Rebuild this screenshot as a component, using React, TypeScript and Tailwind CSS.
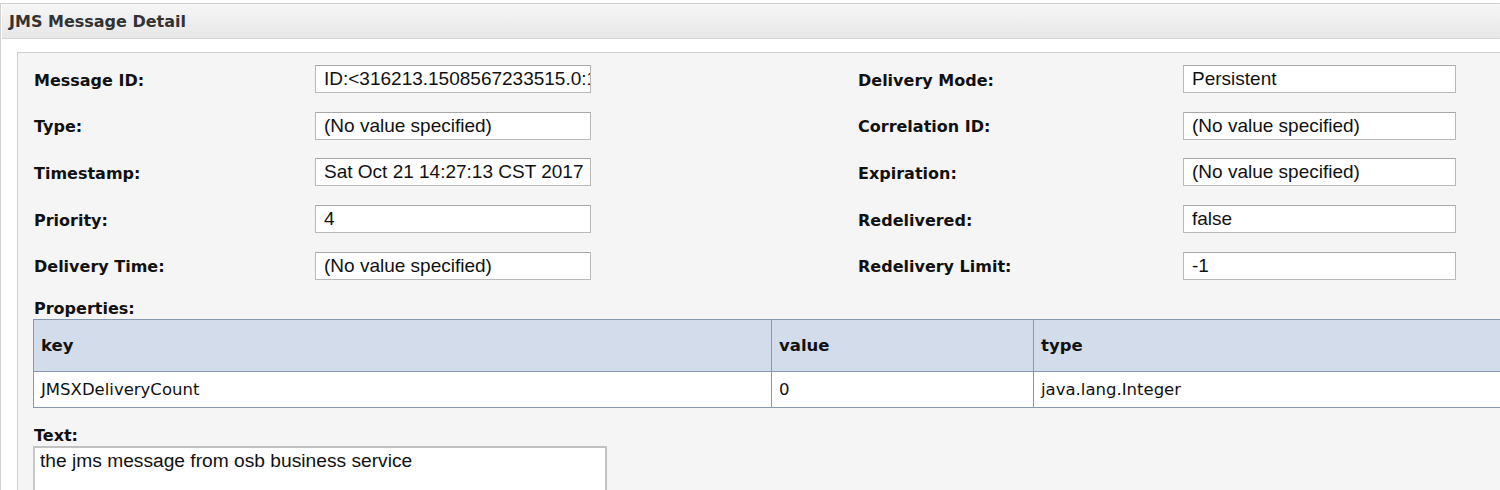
const LABEL_FONT = "font-['DejaVu_Sans',Verdana,sans-serif]";
const VALUE_FONT = "font-['Liberation_Sans',Arial,sans-serif]";

const LEFT = [
  { label: "Message ID:", value: "ID:<316213.1508567233515.0:1" },
  { label: "Type:", value: "(No value specified)" },
  { label: "Timestamp:", value: "Sat Oct 21 14:27:13 CST 2017" },
  { label: "Priority:", value: "4" },
  { label: "Delivery Time:", value: "(No value specified)" },
];

const RIGHT = [
  { label: "Delivery Mode:", value: "Persistent" },
  { label: "Correlation ID:", value: "(No value specified)" },
  { label: "Expiration:", value: "(No value specified)" },
  { label: "Redelivered:", value: "false" },
  { label: "Redelivery Limit:", value: "-1" },
];

function Field({ value, width }: { value: string; width: string }) {
  return (
    <div
      className={`${width} h-[28px] shrink-0 overflow-hidden whitespace-nowrap border border-[#b9b9b9] border-t-[#a8a8a8] bg-white pl-[8px] ${VALUE_FONT} text-[19px] leading-[26px] text-[#111]`}
    >
      {value}
    </div>
  );
}

export default function App() {
  return (
    <div className="h-[490px] w-[1500px] overflow-hidden bg-white pt-[3px]">
      <div className="h-full border-l border-t border-[#d2d2d2] pl-px">
        {/* header */}
        <div className="flex h-[35px] items-center border-b border-[#d4d4d4] bg-gradient-to-b from-[#f6f6f6] to-[#e7e7e7] pl-[7px] pt-[2px]">
          <span className={`${LABEL_FONT} text-[16px] font-bold text-[#333]`}>JMS Message Detail</span>
        </div>

        <div className="pl-[15px] pt-[13px]">
          <div className="h-[500px] border-l border-t border-[#cfcfcf] bg-[#f5f5f5] pl-[15px] pt-[12px]">
            {/* fields */}
            <div className="flex flex-col gap-[18.7px] pl-px">
              {LEFT.map((l, i) => (
                <div key={l.label} className="flex items-center">
                  <div className={`w-[281px] pt-[3px] ${LABEL_FONT} text-[16px] font-bold text-[#111]`}>{l.label}</div>
                  <Field value={l.value} width="w-[276px]" />
                  <div className="w-[267px]" />
                  <div className={`w-[325px] pt-[3px] ${LABEL_FONT} text-[16px] font-bold text-[#111]`}>
                    {RIGHT[i].label}
                  </div>
                  <Field value={RIGHT[i].value} width="w-[273px]" />
                </div>
              ))}
            </div>

            {/* properties */}
            <div className={`mt-[19px] pl-px ${LABEL_FONT} text-[16px] font-bold leading-[20px] text-[#111]`}>
              Properties:
            </div>
            <table className="w-[1500px] table-fixed border-collapse border border-[#8797ae]">
              <colgroup>
                <col className="w-[738px]" />
                <col className="w-[262px]" />
                <col />
              </colgroup>
              <thead>
                <tr className="h-[52px] bg-[#d3dcea]">
                  {["key", "value", "type"].map((h) => (
                    <th
                      key={h}
                      className={`border border-[#8797ae] pl-[7px] pt-[2px] text-left ${LABEL_FONT} text-[16.5px] font-bold text-[#111]`}
                    >
                      {h}
                    </th>
                  ))}
                </tr>
              </thead>
              <tbody>
                <tr className="h-[36px] bg-white">
                  {["JMSXDeliveryCount", "0", "java.lang.Integer"].map((c) => (
                    <td
                      key={c}
                      className={`border border-[#8797ae] pl-[7px] pt-[2px] ${LABEL_FONT} text-[16.5px] text-[#111]`}
                    >
                      {c}
                    </td>
                  ))}
                </tr>
              </tbody>
            </table>

            {/* text */}
            <div className={`mt-[18px] pl-px ${LABEL_FONT} text-[16px] font-bold leading-[20px] text-[#111]`}>
              Text:
            </div>
            <div
              className={`h-[80px] w-[574px] border-2 border-[#c2c2c2] border-l-[#c8c8c8] bg-white pl-[5px] pt-[1px] ${VALUE_FONT} text-[19.2px] leading-[24px] text-[#111]`}
            >
              the jms message from osb business service
            </div>
          </div>
        </div>
      </div>
    </div>
  );
}
